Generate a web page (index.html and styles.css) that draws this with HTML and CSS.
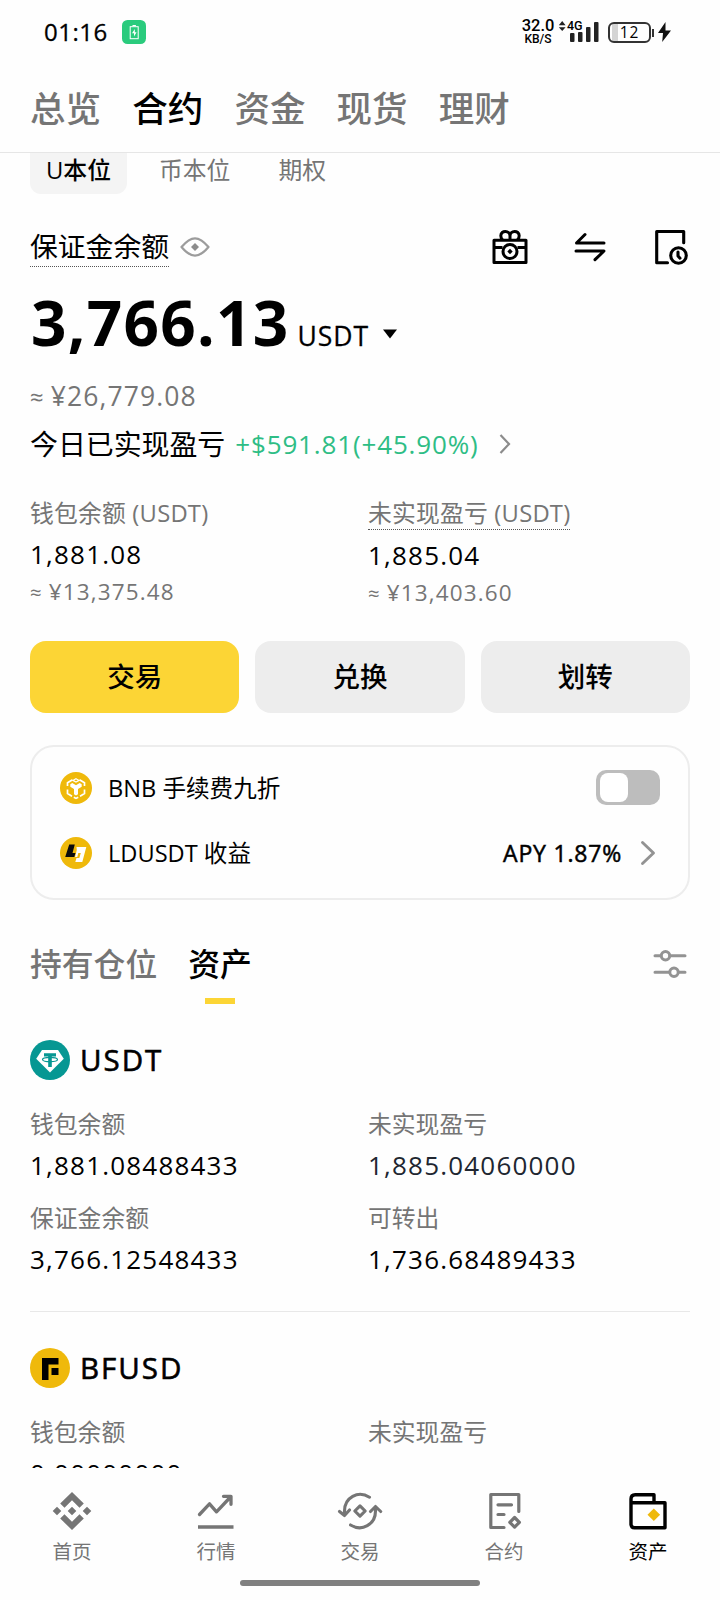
FILE: index.html
```html
<!DOCTYPE html>
<html lang="zh-CN">
<head>
<meta charset="utf-8">
<title>资产</title>
<link rel="stylesheet" href="styles.css">
</head>
<body>
<div class="screen">
  <header class="status">
    <span class="clock">01:16</span>
    <svg class="charge-badge" width="24" height="24" viewBox="0 0 24 24"><rect width="24" height="24" rx="5.5" fill="#2acb7d"/><rect x="8.2" y="6.7" width="8" height="12" fill="none" stroke="#fff" stroke-width="1"/><path d="M10.5 5.6h3.4" stroke="#fff" stroke-width="1.2"/><path d="M12.8 9l-2.8 4.3h2v3.2l2.6-4.2h-1.8z" fill="#fff"/></svg>
    <div class="speed"><span class="speed-num">32.0</span><span class="speed-unit">KB/S</span></div>
    <div class="signal">
      <svg width="42" height="24" viewBox="0 0 42 24"><path d="M.8 5.2L4.2 1l3.4 4.2zM.8 7.2h6.8L4.2 11z" fill="#222"/><g fill="#222"><rect x="12" y="13" width="4.500" height="9" rx="1"/><rect x="20" y="12" width="4.500" height="10" rx="1"/><rect x="28" y="7" width="4.500" height="15" rx="1"/><rect x="36" y="2" width="4.500" height="20" rx="1"/></g></svg>
      <span class="net">4G</span>
    </div>
    <div class="battery">12</div>
    <svg class="bolt" width="13" height="22" viewBox="0 0 13 22"><path d="M7.500 1L0 12h5l-.8 9L13 9.500H7.500z" fill="#111"/></svg>
  </header>
  <nav class="top-tabs"><span>总览</span><span class="active">合约</span><span>资金</span><span>现货</span><span>理财</span></nav>
  <main class="content">
    <div class="chips"><span class="chip active">U本位</span><span class="chip">币本位</span><span class="chip">期权</span></div>

    <section class="balance">
      <div class="balance-head">
        <span class="balance-title">保证金余额</span>
        <svg width="30" height="20" viewBox="0 0 30 20" fill="none" stroke="#9c9c9c" stroke-width="2.200" stroke-linejoin="round"><path d="M1.500 10C7 3.500 11 1.300 15 1.300S23 3.500 28.500 10C23 16.500 19 18.700 15 18.700S7 16.500 1.500 10z"/><path d="M15 6l4 4-4 4-4-4z" fill="#8c8c8c" stroke="none"/></svg>
        <div class="actions">
          <svg width="36" height="36" viewBox="0 0 36 36" fill="none" stroke="#000" stroke-width="3" stroke-linejoin="round"><path d="M2 11.300h32v22.200H2zM2 18.500h8.500M25.500 18.500H34M18 11V6.500M18 7c0-6-9.200-6-9.200-.3 0 1.800.7 3.300 1.900 4.300M18 7c0-6 9.200-6 9.200-.3 0 1.800-.7 3.300-1.900 4.300"/><circle cx="18" cy="22.500" r="7"/><path d="M18 19.800l2.700 2.700-2.700 2.700-2.700-2.700z" fill="#000" stroke="none"/></svg>
          <svg width="32" height="30" viewBox="0 0 32 30" fill="none" stroke="#000" stroke-width="3" stroke-linecap="round" stroke-linejoin="round"><path d="M30 11H2.500L11 2.500M2 19h28l-9 8.700"/></svg>
          <svg class="history" width="34" height="36" viewBox="0 0 34 36" fill="none" stroke="#000" stroke-width="3.100" stroke-linecap="round" stroke-linejoin="round"><path d="M13.500 33.700H2.700V2.500h27v11.200"/><circle cx="24.500" cy="26.500" r="7.800"/><path d="M24 23v4l2 2.200"/></svg>
        </div>
      </div>
      <div class="total"><span class="total-num">3,766.13</span><span class="total-unit">USDT</span><svg class="caret" width="14" height="10" viewBox="0 0 14 10"><path d="M0 .5h14L7 9.500z"/></svg></div>
      <div class="fiat"><span class="approx">≈</span>¥26,779.08</div>
      <div class="pnl"><span>今日已实现盈亏</span><span class="gain">+$591.81(+45.90%)</span><svg width="12" height="20" viewBox="0 0 12 20" fill="none" stroke="#8c8c8c" stroke-width="2.200"><path d="M1.500 1l8.500 9-8.500 9"/></svg></div>
    </section>

    <section class="stats">
      <div class="stat"><span class="label">钱包余额 (USDT)</span><span class="value">1,881.08</span><span class="sub"><span class="approx">≈</span>¥13,375.48</span></div>
      <div class="stat"><span class="label dotted">未实现盈亏 (USDT)</span><span class="value">1,885.04</span><span class="sub"><span class="approx">≈</span>¥13,403.60</span></div>
    </section>

    <div class="buttons"><button class="btn primary">交易</button><button class="btn">兑换</button><button class="btn">划转</button></div>

    <section class="card">
      <div class="card-row">
        <svg width="32" height="32" viewBox="0 0 32 32"><circle cx="16" cy="16" r="16" fill="#efb90b"/><g fill="none" stroke="#fff" stroke-width="1.700"><path d="M12.500 7.800L7.500 10.700V14M19.500 7.800l5 2.900V14M7.500 17.500v4l4.500 2.700M24.500 17.500v4L20 24.200M13.800 25.200l2.200 1.200 2.200-1.200"/><path d="M16 6.700l3 1.700-3 1.700-3-1.700z" stroke-width="1.200"/></g><path d="M10.300 12.300l2-1.200 3.700 2.100 3.700-2.100 2 1.200v2.500l-3.700 2.200v5.300L16 23.500l-2-1.200V17l-3.700-2.200z" fill="#fff"/></svg>
        <span class="card-label">BNB 手续费九折</span>
        <span class="toggle"><span class="knob"></span></span>
      </div>
      <div class="card-row">
        <svg width="32" height="32" viewBox="0 0 32 32"><circle cx="16" cy="16" r="16" fill="#efb90b"/><path d="M9.200 7.500h5.600L12.500 16h3l-1.200 4H5.200z" fill="#0b0b0b"/><path d="M16.500 10h9.800l-4 15h-7l1.200-4h2.800l1.500-5h-2.500l-1 4h-2.200l1.700-7z" fill="#fff"/></svg>
        <span class="card-label">LDUSDT 收益</span>
        <span class="apy">APY 1.87%</span>
        <svg class="row-arrow" width="16" height="26" viewBox="0 0 16 26" fill="none" stroke="#939393" stroke-width="2.900" stroke-linecap="round" stroke-linejoin="round"><path d="M2.500 2.500L13.500 13 2.500 23.500"/></svg>
      </div>
    </section>

    <div class="list-tabs">
      <span class="list-tab">持有仓位</span>
      <span class="list-tab active">资产</span>
      <svg class="filter" width="34" height="28" viewBox="0 0 34 28" fill="none" stroke="#939393" stroke-width="3" stroke-linecap="round"><path d="M2 5.800h5.500M17 5.800h15M2 22.300h14M25.500 22.300H32"/><circle cx="12.500" cy="5.800" r="4.200"/><circle cx="21" cy="22.300" r="4.200"/></svg>
    </div>

    <article class="asset">
      <div class="asset-head"><svg width="40" height="40" viewBox="0 0 40 40"><circle cx="20" cy="20" r="20" fill="#069793"/><path d="M12 10h16l5.800 8.700L20 32.500 6.200 18.700z" fill="#fff"/><path d="M14 13.300h12v3.200h-4.200V27h-3.600V16.500H14z" fill="#069793"/><ellipse cx="20" cy="19.500" rx="7.500" ry="2.200" fill="none" stroke="#069793" stroke-width="1.200"/></svg><span>USDT</span></div>
      <div class="grid">
        <div class="field"><span class="label">钱包余额</span><span class="value">1,881.08488433</span></div>
        <div class="field"><span class="label">未实现盈亏</span><span class="value soft">1,885.04060000</span></div>
        <div class="field"><span class="label">保证金余额</span><span class="value">3,766.12548433</span></div>
        <div class="field"><span class="label">可转出</span><span class="value">1,736.68489433</span></div>
      </div>
    </article>
    <article class="asset">
      <div class="asset-head"><svg width="40" height="40" viewBox="0 0 40 40"><circle cx="20" cy="20" r="20" fill="#efb90b"/><path d="M12 10h16.500v6.500H18.500V32H12z"/><path d="M21.500 20h7v7h-7z"/></svg><span>BFUSD</span></div>
      <div class="grid">
        <div class="field"><span class="label">钱包余额</span><span class="value">0.00000000</span></div>
        <div class="field"><span class="label">未实现盈亏</span></div>
      </div>
    </article>
  </main>
  <footer class="bottom">
    <nav class="bottom-nav">
      <div class="item"><svg width="40" height="40" viewBox="0 0 40 40" fill="#757575"><path d="M20 1l11.800 11.500-4.300 4.200L20 9.300l-7.500 7.400-4.300-4.200zM20 39l11.800-11.500-4.300-4.200-7.500 7.400-7.500-7.400-4.300 4.200zM20 15.700l4.300 4.300-4.300 4.300-4.300-4.300zM5 15.700L9.300 20 5 24.300.7 20zM35 15.700l4.300 4.300-4.300 4.300-4.300-4.300z"/></svg><span>首页</span></div>
      <div class="item"><svg width="40" height="40" viewBox="0 0 40 40" fill="none" stroke="#757575" stroke-width="3.300" stroke-linecap="round" stroke-linejoin="round"><path d="M3.500 23.500L13.500 12.800l7 8L34.500 6M27.500 5.300H35v8"/><path d="M2 36h35.500" stroke-linecap="butt"/></svg><span>行情</span></div>
      <div class="item"><svg width="46" height="40" viewBox="0 0 46 40" fill="none" stroke="#757575" stroke-width="3.100" stroke-linecap="round" stroke-linejoin="round"><path d="M32.500 6.200C21 -1 7.500 6.500 7.500 20v3.500M2.500 20.500l5 4 5-5.500"/><path d="M13.500 34C25 41 38.500 33.500 38.500 20v-3.500M33.500 20.500l5-5 5.200 5"/><path d="M23 14.800l5.200 5.200-5.200 5.200-5.200-5.200z"/></svg><span>交易</span></div>
      <div class="item"><svg width="40" height="40" viewBox="0 0 40 40" fill="none" stroke="#757575" stroke-width="3.200" stroke-linecap="round" stroke-linejoin="round"><path d="M20 36.500H6.800V3.500h28V20.500M14 13.800h13.500M14 23.500h6"/><path d="M30.600 26.500l4.800 4.800-4.800 4.800-4.800-4.800z"/></svg><span>合约</span></div>
      <div class="item active"><svg width="40" height="40" viewBox="0 0 40 40" fill="none" stroke="#000" stroke-width="3.400" stroke-linejoin="round"><path d="M3 11.800h34v25H6.500Q3 36.800 3 33.300V8Q3 3.700 7.200 3.700H26v8"/><path d="M25.800 17.500l6.300 6.300-6.300 6.300-6.300-6.300z" fill="#efb90b" stroke="none"/></svg><span>资产</span></div>
    </nav>
    <div class="home-bar"></div>
  </footer>
</div>
</body>
</html>
```
FILE: styles.css
```css
* { box-sizing: border-box; }
body { margin: 0; background: #fefefe; color: #000; font-family: "Open Sans", "Noto Sans CJK SC", sans-serif; }
svg { display: block; flex: none; }
.screen { width: 720px; height: 1600px; display: flex; flex-direction: column; overflow: hidden; }

.status { height: 64px; flex: none; display: flex; align-items: center; padding: 0 49px 0 44px; }
.clock { font-size: 24px; font-weight: 500; line-height: 32px; width: 78px; letter-spacing: .5px; -webkit-text-stroke: .3px; }
.speed { margin-left: auto; width: 34px; display: flex; flex-direction: column; align-items: center; font-family: Roboto, sans-serif; font-weight: 500; }
.speed-num { font-size: 16.500px; line-height: 14px; }
.speed-unit { font-size: 12px; line-height: 12px; }
.signal { position: relative; width: 42px; height: 24px; margin-left: 3px; }
.net { position: absolute; left: 9px; top: -1px; font: 500 12.500px/14px Roboto, sans-serif; background: #fefefe; height: 12px; }
.battery { position: relative; width: 43px; height: 21px; margin-left: 8px; border: 2px solid #333; border-radius: 6px; font-size: 15.500px; line-height: 17px; text-align: center; letter-spacing: 1px; background: linear-gradient(90deg, #d4d4d4 6px, transparent 6px) 2px 0 no-repeat; }
.battery::after { content: ""; position: absolute; right: -5px; top: 5px; width: 2px; height: 8px; background: #333; }
.bolt { margin-left: 7px; }

.top-tabs { height: 89px; flex: none; display: flex; gap: 31.200px; padding: 0 30px; border-bottom: 1px solid #e6e6e6; font-size: 35.500px; line-height: 88px; font-weight: 500; color: #757575; }
.top-tabs .active { color: #000; }

.content { flex: none; height: 1315px; overflow: hidden; padding: 0 30px; }
.chips { display: flex; height: 41px; color: #757575; font-size: 23.800px; line-height: 34px; }
.chip { padding: 0 16px; margin-right: 16px; }
.chip.active { background: #f4f4f4; color: #000; font-weight: 500; border-radius: 0 0 11px 11px; width: 97px; white-space: nowrap; }

.balance-head { display: flex; align-items: center; height: 41px; margin-top: 32px; }
.balance-title { font-size: 27.800px; line-height: 40px; border-bottom: 1px dotted #555; margin-right: 11px; }
.actions { margin-left: auto; display: flex; align-items: center; gap: 46px; padding-right: 2px; }
.history { margin-left: 2px; }
.total { display: flex; align-items: baseline; height: 64px; margin-top: 23px; line-height: 64px; padding-left: 1px; }
.total-num { font-size: 62px; font-weight: 700; letter-spacing: 1.300px; }
.total-unit { font-size: 26.500px; margin-left: 8px; letter-spacing: 1px; -webkit-text-stroke: .3px; }
.caret { align-self: center; margin: 24px 0 0 14px; }
.fiat { margin-top: 26px; height: 32px; font-size: 26.500px; line-height: 32px; color: #757575; letter-spacing: 1.100px; }
.approx { line-height: 1; font-size: .9em; margin-right: 6px; }
.pnl { margin-top: 14px; height: 36px; display: flex; align-items: center; font-size: 27.900px; line-height: 36px; }
.gain { color: #2ebd85; font-size: 26px; letter-spacing: .850px; margin: 0 20px 0 10px; }

.stats { display: grid; grid-template-columns: 338px 1fr; margin-top: 35px; }
.stat, .field { display: flex; flex-direction: column; align-items: flex-start; }
.label { font-size: 23.800px; line-height: 32px; color: #757575; }
.stats .label { letter-spacing: .2px; }
.dotted { border-bottom: 1px dotted #555; }
.value { margin-top: 8px; font-size: 26px; line-height: 34px; letter-spacing: 1.200px; }
.value.soft { color: #202630; }
.sub { margin-top: 6px; height: 30px; font-size: 22.500px; line-height: 30px; color: #757575; letter-spacing: 1.150px; }

.buttons { display: grid; grid-template-columns: repeat(3, 1fr); gap: 16px; margin-top: 33px; }
.btn { height: 72px; border: 0; padding: 0; border-radius: 16px; background: #ededed; color: #000; font: 500 27.500px/72px "Open Sans", "Noto Sans CJK SC", sans-serif; }
.btn.primary { background: #fcd535; }

.card { margin-top: 32px; height: 155px; border: 2px solid #ededed; border-radius: 24px; padding: 8px 28px; }
.card-row { display: flex; align-items: center; height: 65px; }
.card-label { margin-left: 16px; font-size: 23.600px; line-height: 32px; }
.toggle { margin-left: auto; width: 64px; height: 35px; border-radius: 10px; background: #bdbdbd; padding: 3px 4px; }
.knob { display: block; width: 28px; height: 29px; border-radius: 8px; background: #fff; }
.apy { margin-left: auto; font-size: 23px; letter-spacing: .800px; -webkit-text-stroke: .5px; }
.row-arrow { margin: 0 4px 0 18px; }

.list-tabs { display: flex; height: 64px; margin-top: 40px; font-size: 31.800px; line-height: 48px; font-weight: 500; color: #757575; }
.list-tab { margin-right: 31px; }
.list-tab.active { color: #000; }
.list-tab.active::after { content: ""; display: block; width: 30px; height: 6px; margin: 10px auto 0; background: #fcd535; }
.filter { margin: 10px 3px 0 auto; }

.asset { padding-top: 36px; }
.asset + .asset { margin-top: 35px; border-top: 1px solid #e8e8e8; }
.asset-head { display: flex; align-items: center; height: 40px; gap: 10px; font-size: 29.500px; line-height: 40px; letter-spacing: 2px; -webkit-text-stroke: .6px; }
.grid { display: grid; grid-template-columns: 338px 1fr; row-gap: 20px; margin-top: 28px; }

.bottom { flex: 1; background: #fefefe; }
.bottom-nav { display: grid; grid-template-columns: repeat(5, 1fr); padding-top: 23px; }
.item { display: flex; flex-direction: column; align-items: center; font-size: 19.500px; line-height: 28px; color: #757575; gap: 7px; }
.item.active { color: #000; }
.home-bar { width: 240px; height: 6px; border-radius: 3px; margin: 14px auto 0; background: #808080; }
```
